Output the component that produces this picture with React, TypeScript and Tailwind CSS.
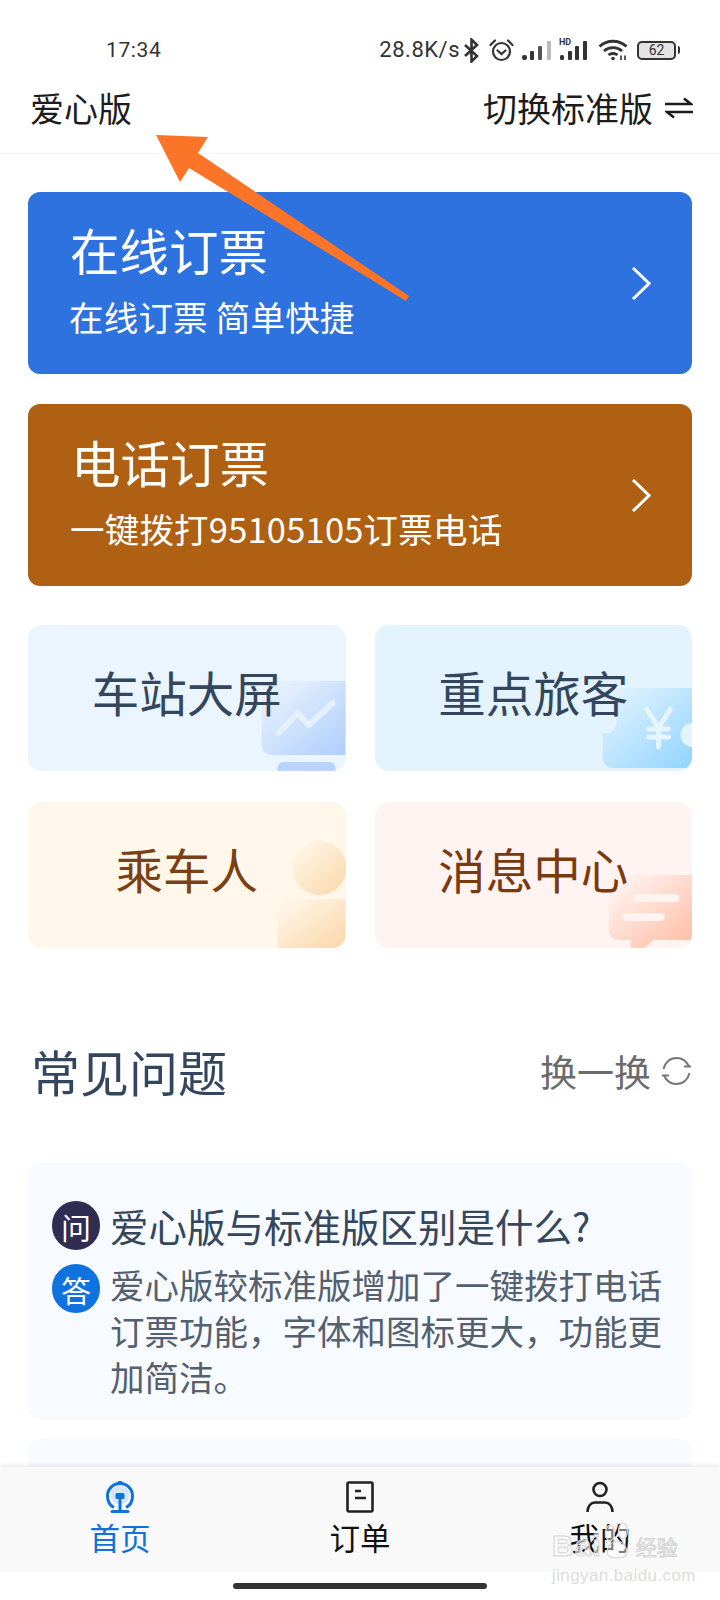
import { useId } from "react";

type TileArtProps = { kind: "screen" | "wallet" | "person" | "chat" };

function TileArt({ kind }: TileArtProps) {
  const id = useId().replace(/:/g, "");
  const stops = {
    screen: ["#e8f2fe", "#b2d1fc"],
    wallet: ["#dff2fe", "#97d6fe"],
    person: ["#fff6e8", "#fbd9ac"],
    chat: ["#fff3ef", "#ffc0aa"],
  }[kind];

  return (
    <svg viewBox="0 0 318 146" className="absolute inset-0 h-full w-full">
      <defs>
        <linearGradient id={id} x1="0.1" y1="0.1" x2="0.9" y2="0.95">
          <stop offset="0" stopColor={stops[0]} />
          <stop offset="1" stopColor={stops[1]} />
        </linearGradient>
      </defs>
      {kind === "screen" && (
        <>
          <path d="M244 56H318V130H244a10 10 0 0 1-10-10V66a10 10 0 0 1 10-10Z" fill={`url(#${id})`} />
          <path d="M251 108L270 88L281 100L305 78" fill="none" stroke="#e6f0fd" strokeWidth="6" strokeLinecap="round" strokeLinejoin="round" />
          <path d="M250 146V143a6 6 0 0 1 6-6H302a6 6 0 0 1 6 6V146Z" fill="#b9d4fb" />
        </>
      )}
      {kind === "wallet" && (
        <>
          <path d="M242 63H318V143H238a10 10 0 0 1-10-10V108H235a14 14 0 0 0 7-10Z" fill={`url(#${id})`} />
          <path d="M318 98a12 12 0 0 0 0 24Z" fill="#e4f4fe" />
          <path d="M272 84L284 103L296 84M284 103V122M274 104H294M274 112H294" fill="none" stroke="#e6f5ff" strokeWidth="5" strokeLinecap="round" strokeLinejoin="round" />
        </>
      )}
      {kind === "person" && (
        <>
          <circle cx="292" cy="66" r="27" fill={`url(#${id})`} />
          <path d="M262 97H318V136a10 10 0 0 1-10 10H250V109a12 12 0 0 1 12-12Z" fill={`url(#${id})`} />
        </>
      )}
      {kind === "chat" && (
        <>
          <path d="M244 73H318V138H279L270 146H256V138H244a10 10 0 0 1-10-10V83a10 10 0 0 1 10-10Z" fill={`url(#${id})`} />
          <rect x="259" y="92" width="46" height="8" rx="4" fill="#fff4f0" />
          <rect x="248" y="111" width="42" height="8" rx="4" fill="#fff4f0" />
        </>
      )}
    </svg>
  );
}

function StatusIcons() {
  return (
    <div className="flex items-center text-[#333]">
      {/* bluetooth */}
      <svg width="15" height="25" viewBox="0 0 15 25" fill="none" stroke="#333" strokeWidth="2.6" className="ml-[4px]">
        <path d="M1 7L13 18L7.5 23.5V1.5L13 7L1 18" />
      </svg>
      {/* alarm */}
      <svg width="25" height="23" viewBox="0 0 25 23" fill="none" stroke="#333" strokeWidth="2.2" className="ml-[10px]">
        <circle cx="12.5" cy="12.5" r="8.5" />
        <path d="M8.5 11.5L12.5 15L16.5 11.5M1.5 6L6 1.5M23.5 6L19 1.5" strokeLinecap="round" />
      </svg>
      {/* signal */}
      <svg width="30" height="20" viewBox="0 0 30 20" className="ml-[8px]">
        <rect x="0" y="15" width="5" height="5" rx="2" fill="#333" />
        <rect x="8" y="11" width="4" height="9" rx="1" fill="#333" />
        <rect x="16" y="6" width="4" height="14" rx="1" fill="#555" />
        <rect x="25" y="1" width="4" height="19" rx="1" fill="#bbb" />
      </svg>
      {/* HD signal */}
      <div className="relative ml-[7px] h-[20px] w-[30px]">
        <svg width="30" height="20" viewBox="0 0 30 20">
          <rect x="1" y="15" width="4" height="5" rx="1.5" fill="#333" />
          <rect x="9" y="11" width="4" height="9" rx="1" fill="#333" />
          <rect x="16" y="6" width="4" height="14" rx="1" fill="#333" />
          <rect x="24" y="1" width="4" height="19" rx="1" fill="#333" />
        </svg>
        <span className="absolute left-0 top-[-4px] font-['Roboto',sans-serif] text-[9px] leading-[12px] font-bold">HD</span>
      </div>
      {/* wifi */}
      <svg width="30" height="22" viewBox="0 0 30 22" fill="none" stroke="#333" strokeWidth="2.8" className="ml-[9px]">
        <path d="M1.5 7.5C9 0.5 21 0.5 28.5 7.5M6 12C11 7.5 19 7.5 24 12M10.5 16C13 14 17 14 19.5 16" />
        <circle cx="15" cy="19.5" r="1.8" fill="#333" stroke="none" />
        <path d="M23 16.5V21M27 16.5V21" strokeWidth="1.6" />
      </svg>
      {/* battery */}
      <div className="ml-[9px] flex items-center">
        <div className="flex h-[19px] w-[39px] items-center justify-center rounded-[5px] border-2 border-[#333] bg-[#e4e4e4] font-['Roboto',sans-serif] text-[14px] leading-none text-[#333]">
          62
        </div>
        <div className="ml-[2px] h-[8px] w-[2px] rounded-r bg-[#333]" />
      </div>
    </div>
  );
}

function Chevron() {
  return (
    <svg width="20" height="35" viewBox="0 0 20 35" fill="none" stroke="#fff" strokeWidth="3">
      <path d="M2 2L18 17.5L2 33" />
    </svg>
  );
}

const actions = [
  { title: "在线订票", sub: "在线订票 简单快捷", bg: "bg-[#2d72de]", titlePl: "pl-[42px]" },
  { title: "电话订票", sub: "一键拨打95105105订票电话", bg: "bg-[#b06012]", titlePl: "pl-[43px]" },
];

const tiles = [
  { label: "车站大屏", art: "screen", cls: "bg-[#ebf5ff] text-[#34465e]" },
  { label: "重点旅客", art: "wallet", cls: "bg-[#e4f4fe] text-[#34465e]" },
  { label: "乘车人", art: "person", cls: "bg-[#fff8ea] text-[#7a4016]" },
  { label: "消息中心", art: "chat", cls: "bg-[#fff4f1] text-[#7a3a10]" },
] as const;

export default function App() {
  return (
    <div className="relative flex h-[1600px] w-[720px] flex-col overflow-hidden bg-white font-['Noto_Sans_CJK_SC',sans-serif]">
      {/* status bar */}
      <div className="flex h-[72px] shrink-0 items-start justify-between pl-[106px] pr-[40px] pt-[37px] font-['Roboto',sans-serif] text-[21px] leading-[26px] text-[#333]">
        <span className="tracking-[0.6px]">17:34</span>
        <div className="flex items-center">
          <span className="text-[22px] tracking-[0.5px]">28.8K/s</span>
          <StatusIcons />
        </div>
      </div>

      {/* header */}
      <header className="flex h-[82px] shrink-0 items-start justify-between border-b border-[#f4f4f4] pl-[30px] pr-[27px] pt-[12px] text-[34px] leading-[48px] text-[#1c1c1c]">
        <span>爱心版</span>
        <div className="flex items-center gap-[12px]">
          <span>切换标准版</span>
          <svg width="28" height="22" viewBox="0 0 28 22" fill="none" stroke="#1c1c1c" strokeWidth="2.6">
            <path d="M0 7H26L19 1.5M28 15H2L9 20.5" />
          </svg>
        </div>
      </header>

      <main className="flex-1 overflow-hidden px-[28px] pt-[38px]">
        <div className="flex flex-col gap-[30px]">
          {actions.map((a) => (
            <div key={a.title} className={`flex h-[182px] items-center justify-between rounded-[12px] pr-[41px] text-white ${a.bg}`}>
              <div className={`pb-[8px] ${a.titlePl}`}>
                <div className="text-[49.5px] leading-[60px]">{a.title}</div>
                <div className="ml-[-1px] mt-[14px] text-[34.5px] leading-[44px] tracking-[0.2px]">{a.sub}</div>
              </div>
              <Chevron />
            </div>
          ))}
        </div>

        <div className="mt-[39px] grid grid-cols-2 gap-x-[29px] gap-y-[31px]">
          {tiles.map((t) => (
            <div key={t.label} className={`relative flex h-[146px] items-center justify-center overflow-hidden rounded-[14px] pb-[12px] ${t.cls}`}>
              <TileArt kind={t.art} />
              <span className="relative text-[47.5px] leading-[60px]">{t.label}</span>
            </div>
          ))}
        </div>

        {/* faq heading */}
        <div className="mt-[91px] flex items-center justify-between">
          <h2 className="pl-[3px] text-[49px] font-normal leading-[64px] text-[#34465e]">常见问题</h2>
          <div className="flex items-center gap-[10px] text-[37px] leading-[50px] text-[#6b6b6b]">
            <span>换一换</span>
            <svg width="31" height="30" viewBox="0 0 31 30" fill="none" stroke="#777" strokeWidth="2">
              <path d="M2.5 13C4 6.5 9 2 15.5 2C21 2 25.5 5 28 10.5M28.5 17C27 23.5 22 28 15.5 28C10 28 5.5 25 3 19.5" />
              <path d="M23 10.5H30M1 19.5H8" />
            </svg>
          </div>
        </div>

        {/* faq card */}
        <div className="mt-[60px] rounded-[14px] bg-[#f7fbff] pb-[21px] pl-[24px] pr-[20px] pt-[38px]">
          <div className="flex items-center gap-[10px]">
            <span className="flex h-[49px] w-[48px] shrink-0 items-center justify-center rounded-full bg-[#2f2d52] text-[30px] leading-none text-white">问</span>
            <span className="text-[38.5px] leading-[49px] text-[#36465c]">爱心版与标准版区别是什么?</span>
          </div>
          <div className="mt-[14px] flex items-start gap-[10px]">
            <span className="flex h-[49px] w-[48px] shrink-0 items-center justify-center rounded-full bg-[#0f72de] text-[30px] leading-none text-white">答</span>
            <p className="mt-[-3px] text-[34.5px] leading-[46px] text-[#54606f]">爱心版较标准版增加了一键拨打电话订票功能，字体和图标更大，功能更加简洁。</p>
          </div>
        </div>

        <div className="mt-[19px] h-[80px] rounded-[14px] bg-[#f7fbff]" />
      </main>

      {/* tab bar */}
      <nav className="grid h-[105px] shrink-0 grid-cols-3 bg-[#f9f9f9] pt-[14px] shadow-[0_-2px_4px_rgba(0,0,0,0.08)]">
        <div className="flex flex-col items-center text-[#0f72d8]">
          <svg width="28" height="32" viewBox="0 0 28 32" fill="none" stroke="#0f72d8" strokeWidth="3">
            <circle cx="14" cy="14" r="9.5" fill="#d5e6fb" stroke="none" />
            <path d="M8 26.5C4 24.5 1.5 20 1.5 15C1.5 8 7 2.5 14 2.5C21 2.5 26.5 8 26.5 15C26.5 20 24 24.5 20 26.5" />
            <path d="M14 15V29" />
            <path d="M6 30.5H22" strokeLinecap="round" />
            <rect x="9.5" y="12" width="9" height="6" rx="1.5" fill="#0f72d8" stroke="none" />
            <rect x="11.5" y="0" width="5" height="3" rx="1.5" fill="#0f72d8" stroke="none" />
          </svg>
          <span className="mt-[2px] text-[30.5px] leading-[44px]">首页</span>
        </div>
        <div className="flex flex-col items-center text-[#111]">
          <svg width="28" height="32" viewBox="0 0 28 32" fill="none" stroke="#222" strokeWidth="2.6">
            <rect x="1.5" y="1.5" width="25" height="29" rx="1.5" />
            <path d="M9 10H15M9 17H20" />
          </svg>
          <span className="mt-[2px] text-[30.5px] leading-[44px]">订单</span>
        </div>
        <div className="flex flex-col items-center text-[#111]">
          <svg width="30" height="32" viewBox="0 0 30 32" fill="none" stroke="#222" strokeWidth="2.6">
            <circle cx="15" cy="8.5" r="6.5" />
            <path d="M2.5 31C2.5 25 6 21.5 10 21.5H20C24 21.5 27.5 25 27.5 31" />
          </svg>
          <span className="mt-[2px] text-[30.5px] leading-[44px]">我的</span>
        </div>
      </nav>

      {/* home indicator */}
      <div className="flex h-[28px] shrink-0 justify-center pt-[11px]">
        <div className="h-[6px] w-[254px] rounded-full bg-[#333]" />
      </div>

      {/* annotation arrow */}
      <svg viewBox="0 0 720 320" className="pointer-events-none absolute left-0 top-0 h-[320px] w-[720px]">
        <path d="M156 135L208 137L198 153L409 296L406 301L189 168L180 182Z" fill="#fb7427" />
      </svg>

      {/* watermark */}
      <div className="pointer-events-none absolute left-[552px] top-[1522px] w-[135px]">
        <div className="flex items-end font-['Liberation_Sans',sans-serif] text-[30px] font-bold leading-[28px] tracking-[1px] text-white/60 [-webkit-text-stroke:1px_#d4d4d4]">
          <span>Bai</span>
          <svg width="30" height="38" viewBox="0 0 30 38" fill="rgba(255,255,255,0.45)" stroke="#d4d4d4" strokeWidth="1.2">
            <ellipse cx="8" cy="11" rx="4.5" ry="8" />
            <ellipse cx="21" cy="9" rx="4.5" ry="8" />
            <path d="M15 19C9 19 3 27 6 33C9 37 21 37 24 33C27 27 21 19 15 19Z" />
          </svg>
          <span className="ml-[4px] font-['Noto_Sans_CJK_SC',sans-serif] text-[21px] font-normal tracking-normal">经验</span>
        </div>
        <div className="mt-[7px] font-['Liberation_Sans',sans-serif] text-[17px] leading-[18px] tracking-[0.4px] text-[#dcdcdc]">jingyan.baidu.com</div>
      </div>
    </div>
  );
}
